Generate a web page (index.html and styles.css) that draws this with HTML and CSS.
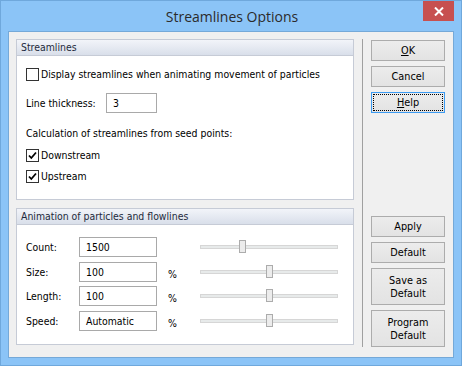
FILE: index.html
```html
<!DOCTYPE html>
<html>
<head>
<meta charset="utf-8">
<link rel="stylesheet" href="styles.css">
</head>
<body>
<div class="window">
  <div class="titlebar">
    <div class="title">Streamlines Options</div>
    <div class="close"><svg width="10" height="9" viewBox="0 0 10 9"><path d="M1 0.5 L9 8.5 M9 0.5 L1 8.5" stroke="#fff" stroke-width="2"/></svg></div>
  </div>
  <div class="content">
    <div class="leftcol">
      <div class="group g1">
        <div class="ghead">Streamlines</div>
        <div class="gbody">
          <div class="row r1"><span class="cb"></span><span>Display streamlines when animating movement of particles</span></div>
          <div class="row r2"><span class="lbl lt">Line thickness:</span><span class="input w51">3</span></div>
          <div class="row r3"><span>Calculation of streamlines from seed points:</span></div>
          <div class="row r4"><span class="cb on"><svg width="11" height="11" viewBox="0 0 11 11"><path d="M2 5.5 L4.3 8 L9 2.5" fill="none" stroke="#000" stroke-width="1.8"/></svg></span><span>Downstream</span></div>
          <div class="row r5"><span class="cb on"><svg width="11" height="11" viewBox="0 0 11 11"><path d="M2 5.5 L4.3 8 L9 2.5" fill="none" stroke="#000" stroke-width="1.8"/></svg></span><span>Upstream</span></div>
        </div>
      </div>
      <div class="group g2">
        <div class="ghead">Animation of particles and flowlines</div>
        <div class="gbody">
          <div class="arow first"><span class="lbl al">Count:</span><span class="input w78">1500</span><span class="pct"></span><div class="slider"><div class="track"></div><div class="thumb" style="left:39px"></div></div></div>
          <div class="arow"><span class="lbl al">Size:</span><span class="input w78">100</span><span class="pct">%</span><div class="slider"><div class="track"></div><div class="thumb" style="left:66px"></div></div></div>
          <div class="arow a3"><span class="lbl al">Length:</span><span class="input w78">100</span><span class="pct">%</span><div class="slider"><div class="track"></div><div class="thumb" style="left:66px"></div></div></div>
          <div class="arow"><span class="lbl al">Speed:</span><span class="input w78">Automatic</span><span class="pct">%</span><div class="slider"><div class="track"></div><div class="thumb" style="left:66px"></div></div></div>
        </div>
      </div>
    </div>
    <div class="sep"></div>
    <div class="btncol">
      <div class="btngroup">
        <div class="btn"><span class="u">O</span>K</div>
        <div class="btn">Cancel</div>
        <div class="btn focus"><div class="focusring"><span class="u">H</span>elp</div></div>
      </div>
      <div class="btngroup bottom">
        <div class="btn">Apply</div>
        <div class="btn">Default</div>
        <div class="btn tall">Save as<br>Default</div>
        <div class="btn tall">Program<br>Default</div>
      </div>
    </div>
  </div>
</div>
</body>
</html>
```
FILE: styles.css
```css
html, body {
  margin: 0;
  padding: 0;
}
body {
  width: 462px;
  height: 366px;
  overflow: hidden;
  font-family: "DejaVu Sans Condensed", "Liberation Sans", Arial, sans-serif;
  font-size: 10.4px;
  color: #000;
}
.window {
  width: 462px;
  height: 366px;
  box-sizing: border-box;
  background: #8bc4f7;
  border: 1px solid #6fa8dc;
  display: flex;
  flex-direction: column;
  padding: 0 7px 7px 7px;
}
.titlebar {
  height: 30px;
  position: relative;
  display: flex;
  justify-content: center;
  align-items: center;
  flex: none;
}
.title {
  font-family: "Open Sans", "Noto Sans", sans-serif;
  font-size: 14px;
  color: #2b2b2b;
  margin-top: 1px;
  margin-left: 2px;
}
.close {
  position: absolute;
  right: 0;
  top: 0;
  width: 31px;
  height: 20px;
  background: #c75050;
  display: flex;
  align-items: center;
  justify-content: center;
}
.content {
  flex: 1;
  background: #f0f0f0;
  border: 1px solid #75a9d8;
  display: flex;
  padding: 7px 9px 10px 7px;
}
.leftcol {
  width: 338px;
  display: flex;
  flex-direction: column;
  flex: none;
}
.group {
  border: 1px solid #c6cbd6;
  background: #fff;
  box-sizing: border-box;
}
.g1 { height: 161px; }
.g2 { height: 137px; margin-top: 8px; }
.ghead {
  height: 15px;
  line-height: 15px;
  padding-left: 4px;
  background: linear-gradient(#f2f4f9, #d9dfea);
  border-bottom: 1px solid #c6cbd6;
  color: #1e2a3c;
}
.gbody {
  padding-left: 9px;
}
.row {
  display: flex;
  align-items: center;
  height: 20px;
}
.r1 { margin-top: 8px; }
.r2 { margin-top: 9px; }
.r3 { margin-top: 11px; height: 18px; }
.r4 { margin-top: 3px; }
.r5 { margin-top: 1px; }
.cb {
  width: 11px;
  height: 11px;
  border: 1px solid #333;
  background: #fff;
  margin-right: 2px;
  display: flex;
  align-items: center;
  justify-content: center;
  flex: none;
}
.lbl { flex: none; }
.lt { width: 80px; }
.al { width: 53px; }
.input {
  height: 18px;
  border: 1px solid #a9a9a9;
  background: #fff;
  box-sizing: content-box;
  line-height: 18px;
  padding-left: 6px;
  flex: none;
}
.w51 { width: 43px; }
.w78 { width: 70px; }
.arow {
  display: flex;
  align-items: center;
  height: 20px;
  margin-top: 5px;
}
.arow.first { margin-top: 12px; }
.arow.a3 { margin-top: 4px; }
.pct {
  width: 22px;
  margin-left: 11px;
  flex: none;
  padding-top: 3px;
}
.slider {
  position: relative;
  width: 138px;
  height: 14px;
  margin-left: 10px;
}
.track {
  position: absolute;
  left: 0;
  right: 0;
  top: 5px;
  height: 2px;
  background: #e7eaea;
  border: 1px solid #d6d6d6;
}
.thumb {
  position: absolute;
  top: 0;
  width: 5px;
  height: 11px;
  background: #ececec;
  border: 1px solid #acacac;
}
.sep {
  width: 1px;
  background: #a0a0a0;
  margin: 0 8px;
  flex: none;
}
.btncol {
  width: 74px;
  display: flex;
  flex-direction: column;
  justify-content: space-between;
  flex: none;
}
.btngroup {
  display: flex;
  flex-direction: column;
  gap: 5px;
  padding-top: 1px;
}
.btngroup.bottom { gap: 5px; }
.btn {
  height: 21px;
  box-sizing: border-box;
  border: 1px solid #acacac;
  background: linear-gradient(#ececec, #e3e3e3);
  display: flex;
  align-items: center;
  justify-content: center;
  text-align: center;
  line-height: 13px;
  font-size: 10.8px;
}
.btn.tall { height: 37px; }
.btn.focus {
  border-color: #3c9bf2;
  padding: 1px;
  align-items: stretch;
  justify-content: stretch;
}
.focusring {
  flex: 1;
  border: 1px dotted #000;
  display: flex;
  align-items: center;
  justify-content: center;
}
.u { text-decoration: underline; }
```
